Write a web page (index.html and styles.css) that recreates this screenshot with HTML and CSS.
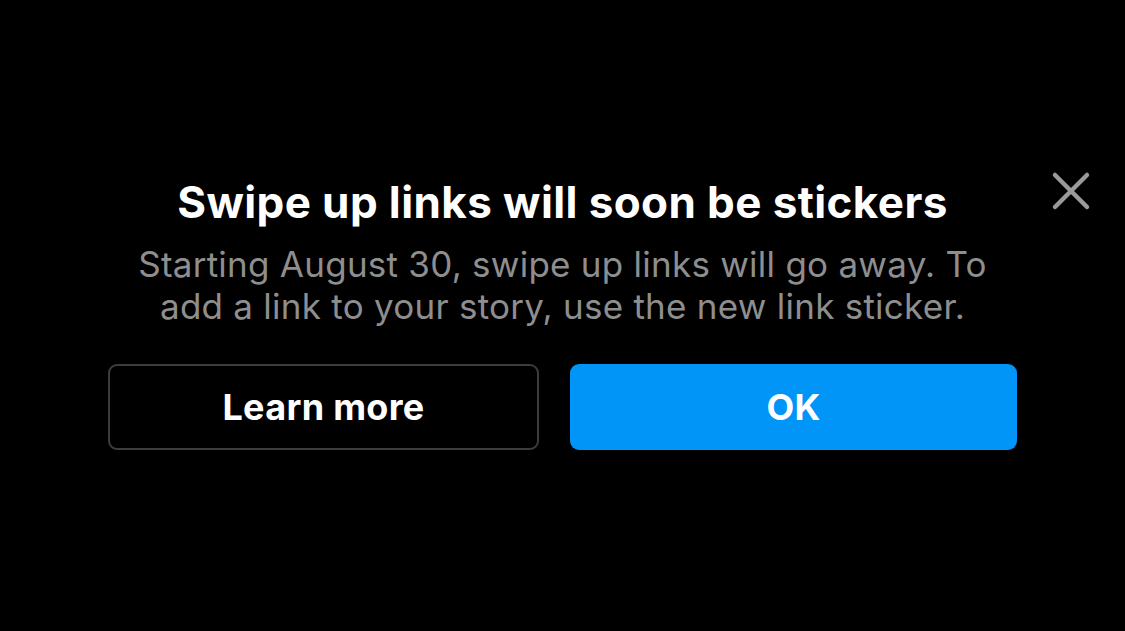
FILE: index.html
```html
<!DOCTYPE html>
<html lang="en">
<head>
  <meta charset="UTF-8" />
  <meta name="viewport" content="width=device-width, initial-scale=1" />
  <title>Swipe up links will soon be stickers</title>
  <link rel="stylesheet" href="styles.css">
</head>
<body>
  <div class="sheet">
    <button type="button" class="close" aria-label="Close">
      <svg viewBox="0 0 40 40" width="40" height="40">
        <path d="M4 4 L36 36 M36 4 L4 36" stroke="#9a9a9a" stroke-width="4.5" stroke-linecap="round" fill="none"/>
      </svg>
    </button>
    <div class="content">
      <h1>Swipe up links will soon be stickers</h1>
      <p class="desc">Starting August 30, swipe up links will go away. To<br>add a link to your story, use the new link sticker.</p>
      <div class="buttons">
        <button type="button" class="secondary">Learn more</button>
        <button type="button" class="primary">OK</button>
      </div>
    </div>
  </div>
</body>
</html>
```

FILE: styles.css
```css
body { margin: 0; padding: 0; background: #000; font-family: Inter, "Liberation Sans", sans-serif; color: #fff; }
.sheet { position: relative; height: 631px; }
.content { display: flex; flex-direction: column; align-items: center; padding: 176px 108px 0 108px; }
h1 { margin: 0; font-size: 44px; line-height: 52px; font-weight: 700; letter-spacing: 0.4px; text-align: center; }
.desc { margin: 15px 0 0; font-size: 35px; line-height: 42px; letter-spacing: 0.25px; color: #8e8e8e; text-align: center; }
.buttons { display: flex; gap: 31px; margin-top: 37px; }
button { font-family: inherit; cursor: pointer; }
.buttons button { height: 86px; border-radius: 9px; font-size: 36px; font-weight: 700; letter-spacing: 0.3px; color: #fff; }
button.secondary { width: 431px; background: #000; border: 2px solid #3c3c3c; }
button.primary { width: 447px; background: #0095f6; border: none; }
.close { position: absolute; top: 171px; left: 1051px; width: 40px; height: 40px; padding: 0; background: none; border: none; }
.close svg { display: block; }
```
